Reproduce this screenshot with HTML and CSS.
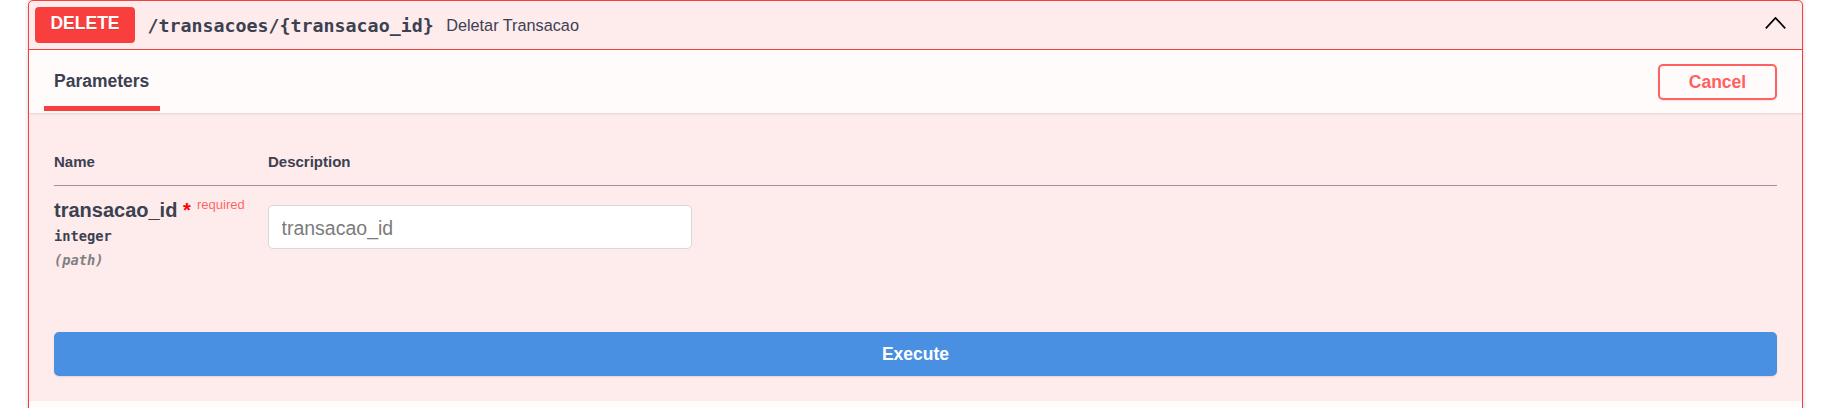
FILE: index.html
```html
<!DOCTYPE html>
<html lang="pt">
<head>
<meta charset="utf-8">
<title>DELETE /transacoes/{transacao_id}</title>
<link rel="stylesheet" href="styles.css">
</head>
<body>
<div class="page">
  <div class="opblock">
    <div class="summary">
      <span class="method">DELETE</span>
      <span class="path">/transacoes/{transacao_id}</span>
      <span class="summary-desc">Deletar Transacao</span>
      <svg class="arrow" width="21" height="12" viewBox="0 0 21 12"><polyline points="0.8,11.3 10.5,0.9 20.2,11.3" fill="none" stroke="#000" stroke-width="1.7"/></svg>
    </div>
    <div class="section-header">
      <div class="tab"><h4 class="tab-title"><span class="tab-label">Parameters</span></h4></div>
      <button class="btn-cancel" type="button">Cancel</button>
    </div>
    <div class="table-container">
      <table class="params">
        <thead>
          <tr><th class="col-name">Name</th><th class="col-desc">Description</th></tr>
        </thead>
        <tbody>
          <tr>
            <td class="col-name">
              <div class="param-name">transacao_id<span class="star">&nbsp;*</span><span class="req">required</span></div>
              <div class="param-type">integer</div>
              <div class="param-in">(path)</div>
            </td>
            <td class="col-desc"><input class="param-input" type="text" placeholder="transacao_id"></td>
          </tr>
        </tbody>
      </table>
    </div>
    <div class="execute-wrapper"><button class="btn-execute" type="button">Execute</button></div>
    <div class="responses-header"></div>
  </div>
</div>
</body>
</html>
```

FILE: styles.css
```css
html, body {
  margin: 0;
  padding: 0;
  height: 408px;
  overflow: hidden;
  background: #ffffff;
  font-family: "Liberation Sans", Arial, sans-serif;
  color: #3b4151;
}

.page {
  padding: 0 39px 0 28px;
}

.opblock {
  border: 1px solid #f93e3e;
  border-radius: 5px;
  background: #feebeb;
  box-shadow: 0 0 4px rgba(0, 0, 0, 0.19);
}

.summary {
  display: flex;
  align-items: center;
  padding: 6px;
  border-bottom: 1px solid #f93e3e;
}

.method {
  box-sizing: border-box;
  width: 100px;
  height: 36px;
  line-height: 32px;
  padding-bottom: 4px;
  text-align: center;
  background: #f93e3e;
  color: #ffffff;
  font-weight: 700;
  font-size: 17.5px;
  border-radius: 4px;
  text-shadow: 0 1px 0 rgba(0, 0, 0, 0.1);
}

.path {
  padding: 0 12.5px;
  font-family: "DejaVu Sans Mono", "Liberation Mono", monospace;
  font-weight: 700;
  font-size: 18.3px;
  color: #3b4151;
}

.summary-desc {
  flex: 1 1 auto;
  font-size: 16.25px;
  color: #3b4151;
}

.arrow {
  display: block;
  margin: 0 10px 4px 0;
}

.section-header {
  box-sizing: border-box;
  display: flex;
  align-items: center;
  justify-content: space-between;
  min-height: 63px;
  padding: 10px 25px;
  background: rgba(255, 255, 255, 0.8);
  box-shadow: 0 1px 2px rgba(0, 0, 0, 0.1);
}

.tab-title {
  margin: 0;
  font-size: 17.5px;
  font-weight: 700;
  color: #3b4151;
}

.tab-label {
  position: relative;
  display: inline-block;
}

.tab-label::after {
  content: "";
  position: absolute;
  left: 50%;
  bottom: -18.5px;
  width: 116px;
  height: 5px;
  transform: translateX(-50%);
  background: #f93e3e;
}

.btn-cancel {
  box-sizing: border-box;
  height: 36px;
  padding: 0 28.8px;
  line-height: 32px;
  border: 2px solid #ff6060;
  border-radius: 5px;
  background: transparent;
  color: #ff6060;
  font-family: "Liberation Sans", Arial, sans-serif;
  font-size: 17.5px;
  font-weight: 700;
  box-shadow: 0 1px 2px rgba(0, 0, 0, 0.1);
}

.table-container {
  padding: 25px;
}

.params {
  width: 100%;
  border-collapse: collapse;
  table-layout: fixed;
}

.params th {
  padding: 15px 0;
  text-align: left;
  font-size: 15px;
  font-weight: 700;
  color: #3b4151;
  border-bottom: 1px solid rgba(59, 65, 81, 0.3);
}

.params th.col-name {
  width: 214px;
}

.params td {
  padding: 12.5px 0;
  vertical-align: top;
}

.param-name {
  font-size: 20px;
  font-weight: 700;
  color: #3b4151;
  white-space: nowrap;
}

.star {
  color: #ff0000;
}

.req {
  position: relative;
  top: -7.5px;
  padding: 6.25px;
  font-size: 13px;
  font-weight: 400;
  color: rgba(255, 0, 0, 0.6);
}

.param-type {
  padding: 6.25px 0;
  line-height: 17.5px;
  font-family: "DejaVu Sans Mono", "Liberation Mono", monospace;
  font-weight: 700;
  font-size: 13.7px;
  color: #3b4151;
}

.param-in {
  line-height: 17.5px;
  font-family: "DejaVu Sans Mono", "Liberation Mono", monospace;
  font-weight: 700;
  font-style: italic;
  font-size: 13.7px;
  color: #808080;
}

.param-input {
  box-sizing: border-box;
  display: block;
  width: 424px;
  height: 44px;
  margin: 6px 0;
  padding: 12px 12.5px 8px;
  line-height: 22px;
  border: 1px solid #d9d9d9;
  border-radius: 5px;
  background: #ffffff;
  font-family: "Liberation Sans", Arial, sans-serif;
  font-size: 19.5px;
  color: #3b4151;
}

.param-input::placeholder {
  color: #7b7b7b;
}

.execute-wrapper {
  padding: 25px;
}

.btn-execute {
  box-sizing: border-box;
  display: block;
  width: 100%;
  height: 44.5px;
  padding: 0 50px;
  line-height: 40px;
  border: 2px solid #4990e2;
  border-radius: 5px;
  background: #4990e2;
  color: #ffffff;
  font-family: "Liberation Sans", Arial, sans-serif;
  font-size: 17.5px;
  font-weight: 700;
  box-shadow: 0 1px 2px rgba(0, 0, 0, 0.1);
}

.responses-header {
  min-height: 63px;
  background: rgba(255, 255, 255, 0.8);
  box-shadow: 0 1px 2px rgba(0, 0, 0, 0.1);
}
```
